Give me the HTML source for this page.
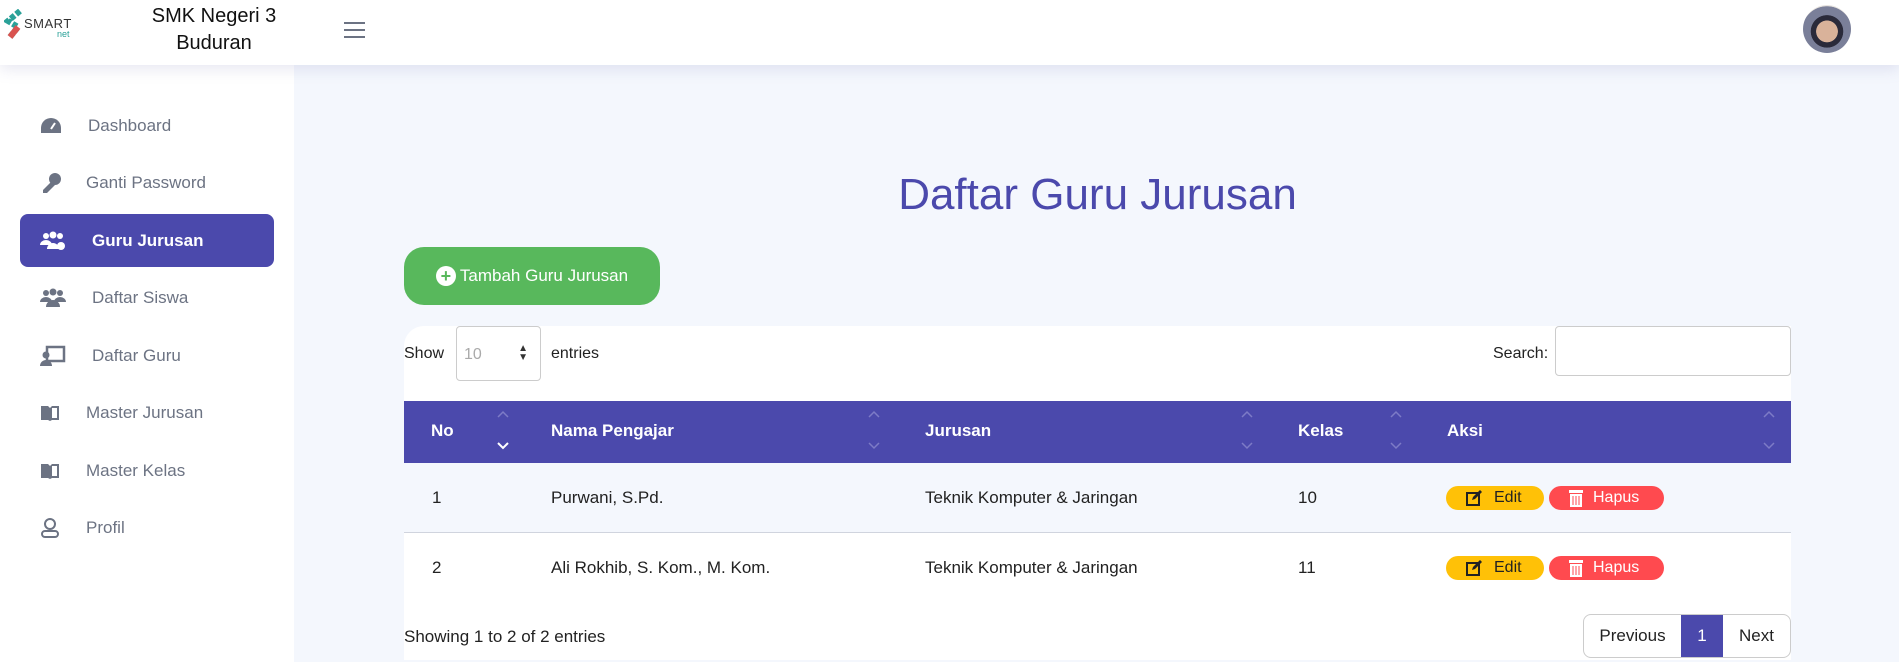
<!DOCTYPE html>
<html><head><meta charset="utf-8"><style>
*{box-sizing:border-box;margin:0;padding:0}
body{width:1899px;height:662px;overflow:hidden;background:#f4f7fd;font-family:"Liberation Sans",sans-serif;position:relative;color:#222}
.a{position:absolute}
.hdr{left:0;top:0;width:1899px;height:65px;background:#fff;box-shadow:0 4px 14px rgba(120,120,180,.18);z-index:2}
.side{left:0;top:65px;width:294px;height:597px;background:#fff}
.nav{position:absolute;left:20px;width:254px;height:53px;font-size:17px;color:#6c7383;display:flex;align-items:center}
.nav svg{position:absolute;left:20px}
.nav span{position:absolute}
.act{background:#4b49ac;color:#fff;border-radius:8px;font-weight:bold}
.btn{position:absolute;height:24px;border-radius:12px;font-size:16px;display:flex;align-items:center;line-height:16px}
</style></head><body>
<div class="a hdr">
  <svg class="a" style="left:4px;top:9px" width="24" height="32" viewBox="0 0 24 32"><path d="M16 2 L4 12 L14 18 L6 28" stroke="#2aa198" stroke-width="6" fill="none" stroke-dasharray="5 2"/><path d="M14 18 L6 28" stroke="#d9534f" stroke-width="6" fill="none"/></svg>
  <div class="a" style="left:24px;top:16px;font-size:13px;color:#333;letter-spacing:.5px">SMART</div>
  <div class="a" style="left:57px;top:29px;font-size:9px;color:#2aa198">net</div>
  <div class="a" style="left:142px;top:3px;width:144px;text-align:center;font-size:20px;line-height:27px;color:#111">SMK Negeri 3<br>Buduran</div>
  <div class="a" style="left:344px;top:22px;width:21px;height:2px;background:#6c7383;box-shadow:0 7px 0 #6c7383,0 14px 0 #6c7383"></div>
  <div class="a" style="left:1803px;top:5px;width:48px;height:48px;border-radius:50%;background:radial-gradient(circle at 50% 55%,#d9b29a 0 30%,#2a2a3a 31% 45%,#7a7f99 46% 70%,#e8e4e0 71%)"></div>
</div>
<div class="a side">
  <div class="nav" style="top:34px"><svg width="22" height="20" viewBox="0 0 22 20"><path d="M11 2A10 10 0 0 0 1 12v5h20v-5A10 10 0 0 0 11 2z" fill="#6c7383"/><path d="M11 13l4-6" stroke="#fff" stroke-width="2"/></svg><span style="left:68px">Dashboard</span></div>
  <div class="nav" style="top:91px"><svg width="22" height="22" viewBox="0 0 22 22"><circle cx="15" cy="7" r="6" fill="#6c7383"/><path d="M11 10L3 18v3h4l8-8" fill="#6c7383"/></svg><span style="left:66px">Ganti Password</span></div>
  <div class="nav act" style="top:149px"><svg width="26" height="20" viewBox="0 0 26 20"><circle cx="6" cy="5" r="3" fill="#fff"/><circle cx="13" cy="4" r="3.5" fill="#fff"/><circle cx="20" cy="5" r="3" fill="#fff"/><path d="M0 14a6 5 0 0 1 12 0zM7 18a6 6 0 0 1 12 0z" fill="#fff"/><circle cx="21" cy="15" r="4" fill="#fff"/></svg><span style="left:72px">Guru Jurusan</span></div>
  <div class="nav" style="top:206px"><svg width="26" height="20" viewBox="0 0 26 20"><circle cx="6" cy="5" r="3" fill="#6c7383"/><circle cx="13" cy="4" r="3.5" fill="#6c7383"/><circle cx="20" cy="5" r="3" fill="#6c7383"/><path d="M0 14a6 5 0 0 1 12 0zM14 14a6 5 0 0 1 12 0zM6 19a7 7 0 0 1 14 0z" fill="#6c7383"/></svg><span style="left:72px">Daftar Siswa</span></div>
  <div class="nav" style="top:264px"><svg width="26" height="22" viewBox="0 0 26 22"><rect x="7" y="2" width="17" height="14" fill="none" stroke="#6c7383" stroke-width="2.5"/><circle cx="6" cy="10" r="3.5" fill="#6c7383"/><path d="M0 21a6 6 0 0 1 12 0z" fill="#6c7383"/></svg><span style="left:72px">Daftar Guru</span></div>
  <div class="nav" style="top:321px"><svg width="20" height="18" viewBox="0 0 20 18"><path d="M1 2h7l2 2 2-2h7v14h-7l-2 1-2-1H1z" fill="#6c7383"/><path d="M12 4h5v10h-5z" fill="#fff"/></svg><span style="left:66px">Master Jurusan</span></div>
  <div class="nav" style="top:379px"><svg width="20" height="18" viewBox="0 0 20 18"><path d="M1 2h7l2 2 2-2h7v14h-7l-2 1-2-1H1z" fill="#6c7383"/><path d="M12 4h5v10h-5z" fill="#fff"/></svg><span style="left:66px">Master Kelas</span></div>
  <div class="nav" style="top:436px"><svg width="20" height="22" viewBox="0 0 20 22"><circle cx="10" cy="7" r="5" fill="none" stroke="#6c7383" stroke-width="2"/><rect x="2" y="14" width="16" height="6" rx="3" fill="none" stroke="#6c7383" stroke-width="2"/></svg><span style="left:66px">Profil</span></div>
</div>

<div class="a" style="left:404px;top:170px;width:1387px;text-align:center;font-size:44px;color:#4b49ac">Daftar Guru Jurusan</div>
<div class="a" style="left:404px;top:247px;width:256px;height:58px;background:#58b85c;border-radius:20px;color:#fff;font-size:17px;display:flex;align-items:center;justify-content:center"><span style="display:inline-block;width:20px;height:20px;border-radius:50%;background:#fff;color:#58b85c;font-weight:bold;text-align:center;line-height:20px;font-size:18px;margin-right:4px">+</span>Tambah Guru Jurusan</div>

<div class="a" style="left:404px;top:326px;width:1387px;height:334px;background:#fff;border-radius:20px 0 0 0"></div>
<div class="a" style="left:404px;top:345px;font-size:16px">Show</div>
<div class="a" style="left:456px;top:326px;width:85px;height:55px;border:1px solid #ccc;border-radius:4px;font-size:16px;color:#aaa;padding:19px 7px">10<span style="position:absolute;right:12px;top:17px;color:#333;font-size:10px;line-height:9px">▲<br>▼</span></div>
<div class="a" style="left:551px;top:345px;font-size:16px">entries</div>
<div class="a" style="left:1493px;top:345px;font-size:16px">Search:</div>
<div class="a" style="left:1555px;top:326px;width:236px;height:50px;border:1px solid #ccc;border-radius:4px"></div>

<div class="a" style="left:404px;top:401px;width:1387px;height:62px;background:#4b49ac;color:#fff;font-size:17px;font-weight:bold">
  <span class="a" style="left:27px;top:20px">No</span>
  <span class="a" style="left:147px;top:20px">Nama Pengajar</span>
  <span class="a" style="left:521px;top:20px">Jurusan</span>
  <span class="a" style="left:894px;top:20px">Kelas</span>
  <span class="a" style="left:1043px;top:20px">Aksi</span>
</div>
<svg class="a" style="left:404px;top:401px" width="1387" height="62">
 <g stroke="#7d7bc6" stroke-width="1.5" fill="none">
  <path d="M94 16l5-5 5 5"/><path d="M465 16l5-5 5 5M465 42l5 5 5-5"/><path d="M838 16l5-5 5 5M838 42l5 5 5-5"/><path d="M987 16l5-5 5 5M987 42l5 5 5-5"/><path d="M1360 16l5-5 5 5M1360 42l5 5 5-5"/>
 </g>
 <path d="M94 42l5 5 5-5" stroke="#fff" stroke-width="2" fill="none"/>
</svg>
<div class="a" style="left:404px;top:463px;width:1387px;height:70px;background:#f4f7fd;border-bottom:1px solid #d0d4de"></div>
<div class="a" style="left:404px;top:533px;width:1387px;height:70px;background:#fff"></div>
<div class="a" style="font-size:17px;left:432px;top:488px">1</div>
<div class="a" style="font-size:17px;left:551px;top:488px">Purwani, S.Pd.</div>
<div class="a" style="font-size:17px;left:925px;top:488px">Teknik Komputer &amp; Jaringan</div>
<div class="a" style="font-size:17px;left:1298px;top:488px">10</div>
<div class="a" style="font-size:17px;left:432px;top:558px">2</div>
<div class="a" style="font-size:17px;left:551px;top:558px">Ali Rokhib, S. Kom., M. Kom.</div>
<div class="a" style="font-size:17px;left:925px;top:558px">Teknik Komputer &amp; Jaringan</div>
<div class="a" style="font-size:17px;left:1298px;top:558px">11</div>

<div class="btn" style="left:1446px;top:486px;width:98px;background:#ffc107;color:#222"><svg style="margin-left:20px" width="16" height="16" viewBox="0 0 16 16"><rect x="1" y="3" width="12" height="12" fill="none" stroke="#222" stroke-width="2"/><path d="M6 10l1-3 7-7 2 2-7 7z" fill="#222"/></svg><span style="margin-left:12px">Edit</span></div>
<div class="btn" style="left:1549px;top:486px;width:115px;background:#ff4a4f;color:#fff"><svg style="margin-left:20px" width="14" height="18" viewBox="0 0 14 18"><rect x="0" y="1" width="14" height="3" fill="#fff"/><rect x="1" y="5" width="12" height="13" fill="#fff"/><path d="M4 7v9M7 7v9M10 7v9" stroke="#ff4a4f"/></svg><span style="margin-left:10px">Hapus</span></div>
<div class="btn" style="left:1446px;top:556px;width:98px;background:#ffc107;color:#222"><svg style="margin-left:20px" width="16" height="16" viewBox="0 0 16 16"><rect x="1" y="3" width="12" height="12" fill="none" stroke="#222" stroke-width="2"/><path d="M6 10l1-3 7-7 2 2-7 7z" fill="#222"/></svg><span style="margin-left:12px">Edit</span></div>
<div class="btn" style="left:1549px;top:556px;width:115px;background:#ff4a4f;color:#fff"><svg style="margin-left:20px" width="14" height="18" viewBox="0 0 14 18"><rect x="0" y="1" width="14" height="3" fill="#fff"/><rect x="1" y="5" width="12" height="13" fill="#fff"/><path d="M4 7v9M7 7v9M10 7v9" stroke="#ff4a4f"/></svg><span style="margin-left:10px">Hapus</span></div>

<div class="a" style="left:404px;top:627px;font-size:17px">Showing 1 to 2 of 2 entries</div>
<div class="a" style="left:1583px;top:614px;width:208px;height:44px;border:1px solid #ccc;border-radius:8px;overflow:hidden;display:flex;font-size:17px">
  <div style="width:97px;display:flex;align-items:center;justify-content:center">Previous</div>
  <div style="width:42px;background:#4b49ac;color:#fff;display:flex;align-items:center;justify-content:center">1</div>
  <div style="flex:1;display:flex;align-items:center;justify-content:center">Next</div>
</div>
</body></html>
